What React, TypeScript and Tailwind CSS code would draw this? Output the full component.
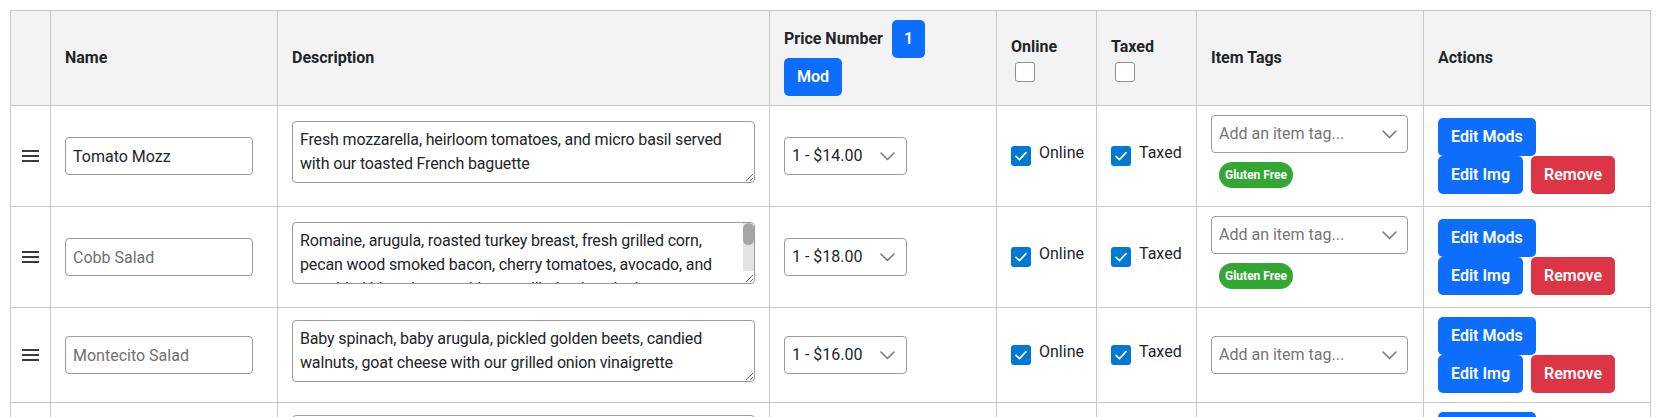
import React from "react";

type Item = {
  name: string;
  muted: boolean;
  desc: string;
  price: string;
  tags: string[];
  scroll: boolean;
};

const items: Item[] = [
  {
    name: "Tomato Mozz",
    muted: false,
    desc: "Fresh mozzarella, heirloom tomatoes, and micro basil served with our toasted French baguette",
    price: "1 - $14.00",
    tags: ["Gluten Free"],
    scroll: false,
  },
  {
    name: "Cobb Salad",
    muted: true,
    desc: "Romaine, arugula, roasted turkey breast, fresh grilled corn, pecan wood smoked bacon, cherry tomatoes, avocado, and crumbled bleu cheese with our grilled onion vinaigrette",
    price: "1 - $18.00",
    tags: ["Gluten Free"],
    scroll: true,
  },
  {
    name: "Montecito Salad",
    muted: true,
    desc: "Baby spinach, baby arugula, pickled golden beets, candied walnuts, goat cheese with our grilled onion vinaigrette",
    price: "1 - $16.00",
    tags: [],
    scroll: false,
  },
  {
    name: "Chopped Salad",
    muted: true,
    desc: "Chopped romaine, salami, garbanzo beans, provolone, tomatoes and pepperoncini with our house Italian dressing",
    price: "1 - $15.00",
    tags: [],
    scroll: false,
  },
];

function Chevron() {
  return (
    <svg width="15" height="9" viewBox="0 0 15 9" fill="none" className="shrink-0">
      <path d="M1 1l6.5 6.5L14 1" stroke="#777" strokeWidth="1.5" strokeLinecap="round" strokeLinejoin="round" />
    </svg>
  );
}

function Handle() {
  return (
    <svg width="17" height="12" viewBox="0 0 17 12" fill="none" className="shrink-0">
      <path d="M0 1h17M0 6h17M0 11h17" stroke="#3a3a3a" strokeWidth="1.8" />
    </svg>
  );
}

function Box({ checked }: { checked: boolean }) {
  if (!checked) {
    return <span className="block h-[20px] w-[20px] min-w-[20px] shrink-0 rounded-[3px] border border-[#8f8f8f] bg-white" />;
  }
  return (
    <span className="flex h-[20px] w-[20px] min-w-[20px] shrink-0 items-center justify-center rounded-[3px] bg-[#0078d4]">
      <svg width="12" height="10" viewBox="0 0 12 10" fill="none">
        <path d="M1 5.3l3.5 3.3L11 1.6" stroke="white" strokeWidth="1.6" strokeLinecap="round" strokeLinejoin="round" />
      </svg>
    </span>
  );
}

function CheckLabel({ label }: { label: string }) {
  return (
    <div className="flex items-start gap-2 pb-[5px]">
      <span className="mt-[5px] block">
        <Box checked />
      </span>
      <span className="leading-6 text-[#212529]">{label}</span>
    </div>
  );
}

const thBase =
  "border-r border-b border-[#c8c8c8] bg-[#f3f3f3] py-[9px] text-left align-middle font-bold leading-6 text-[#212529]";
const th = thBase + " px-[14px]";
const tdBase = "border-r border-b border-[#c8c8c8] py-[9px] align-middle";
const td = tdBase + " px-[14px]";
const btn = "h-[38px] rounded-[5px] text-base font-semibold leading-6 text-white";

export default function App() {
  return (
    <div className="min-h-[417px] bg-white px-[10px] pt-[10px] font-['Roboto',sans-serif] text-base text-[#212529]">
      <table className="w-[1641px] table-fixed border-separate border-spacing-0 border-l border-t border-[#c8c8c8]">
        <thead>
          <tr>
            <th className={thBase + " w-[40px]"}></th>
            <th className={th + " w-[227px]"}>Name</th>
            <th className={th + " w-[492px]"}>Description</th>
            <th className={th + " w-[227px]"}>
              <div className="flex items-center gap-[9px]">
                <span>Price Number</span>
                <button className={btn + " bg-[#0d6efd] px-[12px]"}>1</button>
              </div>
              <button className={btn + " bg-[#0d6efd] px-[13px]"}>Mod</button>
            </th>
            <th className={th + " w-[100px]"}>
              <div className="flex flex-col items-start gap-[3px]">
                <span>Online</span>
                <span className="ml-[4px] block">
                  <Box checked={false} />
                </span>
              </div>
            </th>
            <th className={th + " w-[100px]"}>
              <div className="flex flex-col items-start gap-[3px]">
                <span>Taxed</span>
                <span className="ml-[4px] block">
                  <Box checked={false} />
                </span>
              </div>
            </th>
            <th className={th + " w-[227px]"}>Item Tags</th>
            <th className={th + " w-[227px]"}>Actions</th>
          </tr>
        </thead>
        <tbody>
          {items.map((it) => (
            <tr key={it.name}>
              <td className={tdBase}>
                <div className="flex justify-center">
                  <Handle />
                </div>
              </td>
              <td className={td}>
                <input
                  className="block h-[38px] w-[188px] rounded-[4px] border border-[#9a9a9a] bg-white px-[7px] text-base leading-6 text-[#212529] outline-none placeholder:text-[#6f6f6f]"
                  {...(it.muted ? { placeholder: it.name } : { defaultValue: it.name })}
                />
              </td>
              <td className={td}>
                <div className="relative mb-2">
                  <textarea
                    className="block h-[62px] w-full resize-y overflow-hidden rounded-[4px] border border-[#9a9a9a] bg-white px-[7px] py-[6px] text-base leading-6 tracking-[-0.15px] text-[#212529] outline-none"
                    defaultValue={it.desc}
                  />
                  {it.scroll && (
                    <div className="absolute right-[1px] top-[1px] flex h-[48px] w-[11px] flex-col rounded-tr-[3px] bg-[#e4e4e4]">
                      <div className="h-[22px] w-[11px] rounded-full bg-[#a6a6a6]" />
                    </div>
                  )}
                </div>
              </td>
              <td className={td}>
                <div className="flex h-[38px] w-[123px] items-center justify-between rounded-[4px] border border-[#9a9a9a] bg-white pl-[7px] pr-[11px]">
                  <span className="leading-6 text-[#212529]">{it.price}</span>
                  <Chevron />
                </div>
              </td>
              <td className={td}>
                <CheckLabel label="Online" />
              </td>
              <td className={td}>
                <CheckLabel label="Taxed" />
              </td>
              <td className={td}>
                <div className="flex h-[38px] w-[197px] items-center justify-between rounded-[4px] border border-[#9a9a9a] bg-white pl-[7px] pr-[10px]">
                  <span className="leading-6 text-[#757575]">Add an item tag...</span>
                  <Chevron />
                </div>
                {it.tags.length > 0 && (
                  <div className="my-[9px] flex gap-1 pl-2">
                    {it.tags.map((t) => (
                      <span
                        key={t}
                        className="flex h-[26px] items-center rounded-full bg-[#33a633] px-[6px] text-[12px] font-bold text-white"
                      >
                        {t}
                      </span>
                    ))}
                  </div>
                )}
              </td>
              <td className={td}>
                <div className="flex flex-col items-start">
                  <button className={btn + " bg-[#0d6efd] px-[13px]"}>Edit Mods</button>
                  <div className="flex gap-2">
                    <button className={btn + " bg-[#0d6efd] px-[13px]"}>Edit Img</button>
                    <button className={btn + " bg-[#dc3545] px-[13px]"}>Remove</button>
                  </div>
                </div>
              </td>
            </tr>
          ))}
        </tbody>
      </table>
    </div>
  );
}
